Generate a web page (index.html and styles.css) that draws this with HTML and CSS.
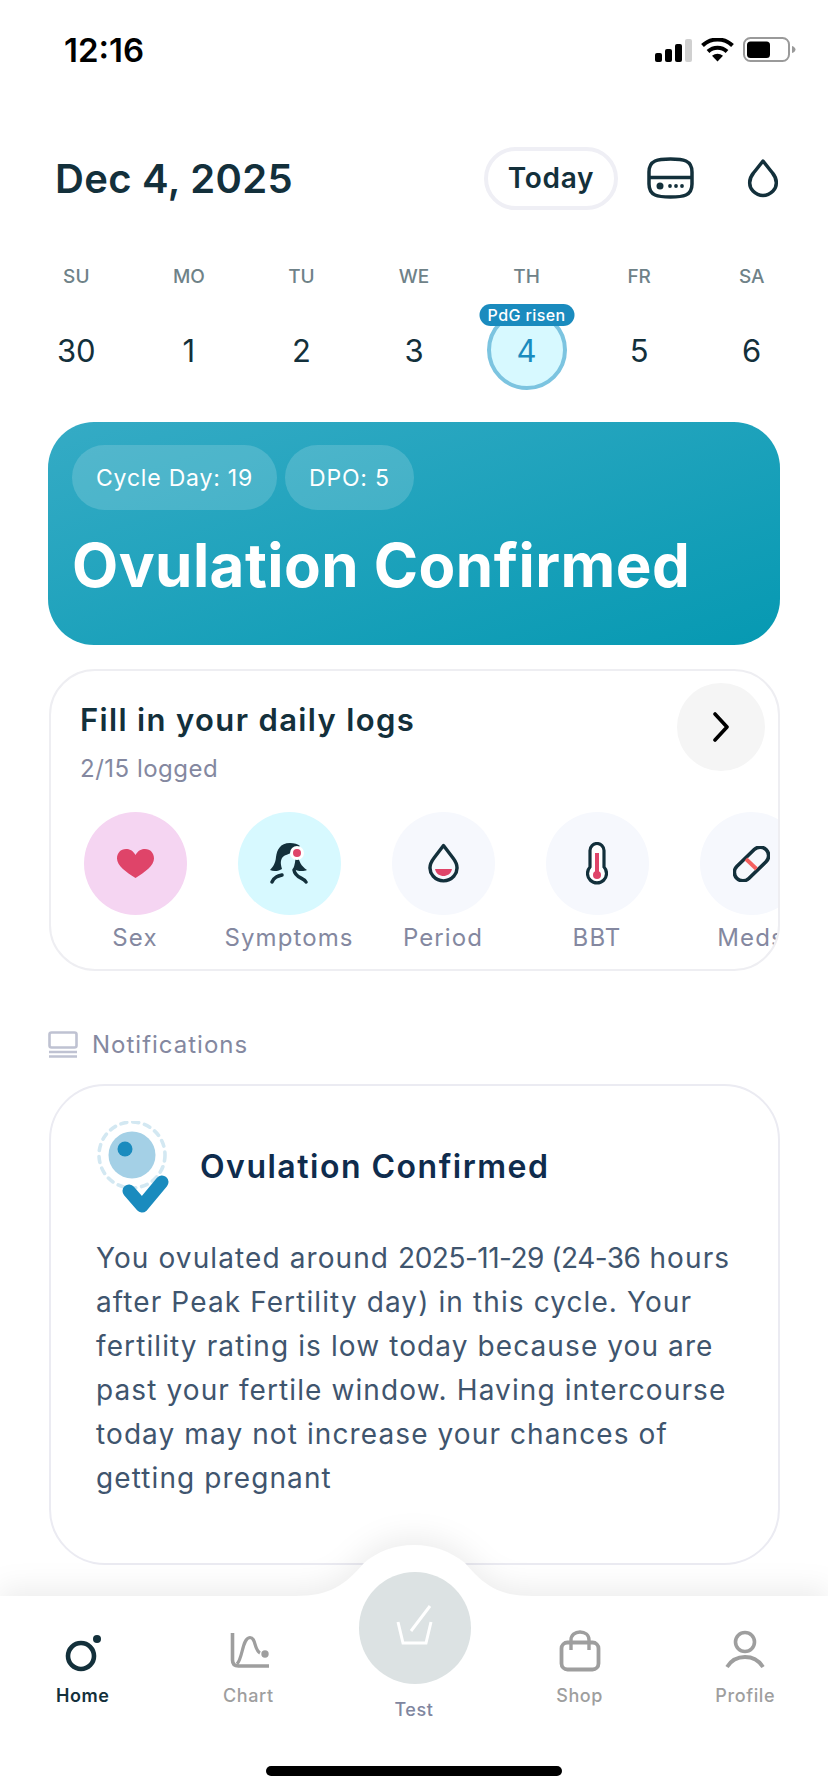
FILE: index.html
```html
<!DOCTYPE html>
<html lang="en">
<head>
    <meta charset="UTF-8">
    <title>Home</title>
    <link rel="stylesheet" href="styles.css">
</head>
<body>
    <div class="screen">
        <div class="status-bar">
            <span class="time">12:16</span>
            <div class="status-icons">
                <svg class="signal" width="37" height="23" viewBox="0 0 37 23">
                    <rect x="0" y="14" width="7" height="9" rx="2"/>
                    <rect x="10" y="10" width="7" height="13" rx="2"/>
                    <rect x="20" y="5" width="7" height="18" rx="2"/>
                    <rect x="30" y="0" width="7" height="23" rx="2" fill="#d0d0d0"/>
                </svg>
                <svg class="wifi" width="33" height="24" viewBox="0 0 33 24">
                    <path d="M1.5 7.5C10 -.5 23 -.5 31.5 7.5" fill="none" stroke="#000" stroke-width="4"/>
                    <path d="M7 13.5C12.5 8.5 20.5 8.5 26 13.5" fill="none" stroke="#000" stroke-width="4"/>
                    <path d="M16.5 23.5L11 17.8C14.5 15 18.5 15 22 17.8Z"/>
                </svg>
                <svg class="battery" width="53" height="26" viewBox="0 0 53 26">
                    <rect x="1" y="1" width="45" height="23" rx="6.5" fill="none" stroke="#9a9a9a" stroke-width="2"/>
                    <rect x="4" y="4.500" width="23" height="16.500" rx="3.500"/>
                    <path d="M49 9C51 9.500 52.500 11 52.500 12.500C52.500 14 51 15.500 49 16Z" fill="#9a9a9a"/>
                </svg>
            </div>
        </div>

        <div class="date-row">
            <h1 class="date">Dec 4, 2025</h1>
            <button class="today">Today</button>
            <svg class="device-icon" width="47" height="42" viewBox="0 0 47 42">
                <path d="M23.500 2C36 2 45 3 45 15V27C45 39 36 40 23.500 40C11 40 2 39 2 27V15C2 3 11 2 23.500 2Z" fill="none" stroke="#13303b" stroke-width="3.500"/>
                <path d="M2 20.500H45" stroke="#13303b" stroke-width="3.500"/>
                <circle cx="13" cy="29" r="3.500" fill="#13303b"/>
                <circle cx="23" cy="29" r="1.900" fill="#13303b"/>
                <circle cx="29" cy="29" r="1.900" fill="#13303b"/>
                <circle cx="35" cy="29" r="1.900" fill="#13303b"/>
            </svg>
            <svg class="drop-icon" width="32" height="40" viewBox="0 0 32 40">
                <path d="M16 3L25.500 15C31 21.500 30 29 26 33C20 39 12 39 6 33C2 29 1 21.500 6.500 15Z" fill="none" stroke="#13303b" stroke-width="3.500" stroke-linejoin="round"/>
            </svg>
        </div>

        <div class="week">
            <span class="weekday">SU</span>
            <span class="weekday">MO</span>
            <span class="weekday">TU</span>
            <span class="weekday">WE</span>
            <span class="weekday">TH</span>
            <span class="weekday">FR</span>
            <span class="weekday">SA</span>
            <div class="day">30</div>
            <div class="day">1</div>
            <div class="day">2</div>
            <div class="day">3</div>
            <div class="day current">4<span class="day-badge">PdG risen</span></div>
            <div class="day">5</div>
            <div class="day">6</div>
        </div>

        <div class="hero">
            <div class="hero-pills">
                <span class="hero-pill">Cycle Day: 19</span>
                <span class="hero-pill">DPO: 5</span>
            </div>
            <h2 class="hero-title">Ovulation Confirmed</h2>
        </div>

        <div class="logs-card">
            <div class="logs-head">
                <div>
                    <div class="logs-title">Fill in your daily logs</div>
                    <div class="logs-sub">2/15 logged</div>
                </div>
                <div class="logs-arrow">
                    <svg width="18" height="30" viewBox="0 0 18 30">
                        <path d="M3 2L15 15L3 28" fill="none" stroke="#000" stroke-width="3.600" stroke-linecap="round" stroke-linejoin="round"/>
                    </svg>
                </div>
            </div>
            <div class="logs-row">
                <div class="log-item">
                    <div class="log-circle pink">
                        <svg width="37" height="29" viewBox="0 0 37 29">
                            <path d="M18.500 6C16 1.500 12.500 0 9 0C3.500 0 0 4.200 0 9.500C0 16.500 9 23 18.500 29C28 23 37 16.500 37 9.500C37 4.200 33.500 0 28 0C24.500 0 21 1.500 18.500 6Z" fill="#df4469"/>
                        </svg>
                    </div>
                    <span class="log-label">Sex</span>
                </div>
                <div class="log-item">
                    <div class="log-circle cyan">
                        <svg width="39" height="42" viewBox="0 0 39 42">
                            <path d="M20 0C10 0 7 7 6 14C5.500 20 3 24 0 27C4 29 9 28 12 26C11 22 10 19 12 15C14 12 19 11 24 9L30 3C28 1 24 0 20 0Z" fill="#13303b"/>
                            <path d="M28 13C29 18 31 23 37 27C33 29 27 28 23 26C25 22 25 18 26 13Z" fill="#13303b"/>
                            <path d="M2 39C4 34 8 33 12 32M36 39C33 34 25 35 24 27" fill="none" stroke="#13303b" stroke-width="3.400" stroke-linecap="round"/>
                            <circle cx="27" cy="10" r="7" fill="#fff"/>
                            <circle cx="27" cy="10" r="4" fill="#df4469"/>
                        </svg>
                    </div>
                    <span class="log-label">Symptoms</span>
                </div>
                <div class="log-item">
                    <div class="log-circle pale">
                        <svg width="31" height="41" viewBox="0 0 31 41">
                            <path d="M15.500 2.500L25 15C30 21.500 30 28 26 33C20 39.500 11 39.500 5 33C1 28 1 21.500 6 15Z" fill="none" stroke="#13303b" stroke-width="3.400" stroke-linejoin="round"/>
                            <path d="M7 26H24C23 31 19 33 15.500 33C12 33 8 31 7 26Z" fill="#df4469"/>
                        </svg>
                    </div>
                    <span class="log-label">Period</span>
                </div>
                <div class="log-item">
                    <div class="log-circle pale">
                        <svg width="22" height="44" viewBox="0 0 22 44">
                            <path d="M4 25V8.500a7 7 0 0 1 14 0V25a9.500 9.500 0 1 1 -14 0Z" fill="#fff" stroke="#13303b" stroke-width="3.200"/>
                            <path d="M11 11V30" stroke="#df4469" stroke-width="4"/>
                            <circle cx="11" cy="33" r="4" fill="#df4469"/>
                        </svg>
                    </div>
                    <span class="log-label">BBT</span>
                </div>
                <div class="log-item">
                    <div class="log-circle pale">
                        <svg class="pill-icon" width="37" height="36" viewBox="0 0 37 36">
                            <rect x="-2" y="9.500" width="41" height="17" rx="8.500" transform="rotate(-44 18.500 18)" fill="none" stroke="#13303b" stroke-width="3.600"/>
                            <path d="M13 13L23.500 23" stroke="#f4605f" stroke-width="3.800"/>
                        </svg>
                    </div>
                    <span class="log-label">Meds</span>
                </div>
            </div>
        </div>

        <div class="notif-label">
            <svg width="30" height="27" viewBox="0 0 30 27">
                <rect x="1.500" y="1.500" width="27" height="15" rx="2" fill="none" stroke="#bfc2d2" stroke-width="2.600"/>
                <path d="M1 21H29M1 25.500H29" stroke="#bfc2d2" stroke-width="2.400"/>
            </svg>
            <span>Notifications</span>
        </div>

        <div class="notif-card">
            <div class="notif-head">
                <svg width="72" height="94" viewBox="0 0 72 94">
                    <circle cx="35" cy="34" r="33" fill="none" stroke="#d3e8f2" stroke-width="3.600" stroke-dasharray="6 6" stroke-linecap="round"/>
                    <circle cx="35" cy="34" r="23.500" fill="#a4d0e6"/>
                    <circle cx="28" cy="28" r="7.500" fill="#1a8bbe"/>
                    <path d="M32 70L45 85L65 61" fill="none" stroke="#1a8bbe" stroke-width="13" stroke-linecap="round" stroke-linejoin="round"/>
                </svg>
                <h3 class="notif-title">Ovulation Confirmed</h3>
            </div>
            <p class="notif-body">You ovulated around <span class="tight">2025-11-29 (24-36</span> hours<br>after Peak Fertility day) in this cycle. Your<br>fertility rating is low today because you are<br>past your fertile window. Having intercourse<br>today may not increase your chances of<br>getting pregnant</p>
        </div>

        <div class="tab-bar">
            <svg class="tab-bg" width="828" height="247" viewBox="0 0 828 247">
                <path d="M0 51H296C330 51 345 40 364 18C378 6 395 0 414 0C433 0 450 6 465 18C484 40 498 51 532 51H828V247H0Z" fill="#fff"/>
            </svg>
            <div class="tabs">
                <div class="tab active">
                    <svg width="40" height="42" viewBox="0 0 40 42">
                        <circle cx="18" cy="26" r="13" fill="none" stroke="#13303b" stroke-width="4.600"/>
                        <circle cx="34" cy="9" r="4" fill="#13303b"/>
                    </svg>
                    <span>Home</span>
                </div>
                <div class="tab">
                    <svg class="chart-icon" width="42" height="42" viewBox="0 0 42 42">
                        <path d="M3.500 3V30Q3.500 36 9.500 36H40" fill="none" stroke="#9e9e9e" stroke-width="3.600"/>
                        <path d="M8 34C14 28 13 8 21 7.500C27 7.500 25 20 31 23" fill="none" stroke="#9e9e9e" stroke-width="3.200"/>
                        <circle cx="36" cy="24" r="3.700" fill="#9e9e9e"/>
                    </svg>
                    <span>Chart</span>
                </div>
                <div class="tab test">
                    <div class="test-circle">
                        <svg width="112" height="112" viewBox="0 0 112 112">
                            <path d="M39 50L44 71H67L72 50M52 59L71 34" fill="none" stroke="#fff" stroke-width="3"/>
                        </svg>
                    </div>
                    <span>Test</span>
                </div>
                <div class="tab">
                    <svg width="42" height="42" viewBox="0 0 42 42">
                        <rect x="2.500" y="12.500" width="37" height="27" rx="6" fill="none" stroke="#9e9e9e" stroke-width="3.800"/>
                        <path d="M12 20V10C12 5 16 2 21 2C26 2 30 5 30 10V20" fill="none" stroke="#9e9e9e" stroke-width="3.400"/>
                    </svg>
                    <span>Shop</span>
                </div>
                <div class="tab">
                    <svg width="42" height="42" viewBox="0 0 42 42">
                        <circle cx="21" cy="12" r="9.500" fill="none" stroke="#9e9e9e" stroke-width="3.600"/>
                        <path d="M3 37C8 29 15 27 21 27C27 27 34 29 39 37" fill="none" stroke="#9e9e9e" stroke-width="3.800"/>
                    </svg>
                    <span>Profile</span>
                </div>
            </div>
            <div class="home-indicator"></div>
        </div>
    </div>
</body>
</html>
```

FILE: styles.css
```css
* {
    box-sizing: border-box;
}
body {
    margin: 0;
    background-color: #fff;
    font-family: Inter, "Open Sans", sans-serif;
    color: #13303b;
}
h1, h2, h3, p {
    margin: 0;
}
.screen {
    position: relative;
    width: 828px;
    height: 1792px;
    overflow: hidden;
    background-color: #fff;
}

/* status bar */
.status-bar {
    display: flex;
    justify-content: space-between;
    align-items: center;
    height: 100px;
    padding: 0 32px 0 64px;
    color: #000;
}
.time {
    font-size: 33px;
    font-weight: 600;
}
.status-icons {
    display: flex;
    align-items: center;
    gap: 9px;
}

/* date header */
.date-row {
    display: flex;
    align-items: center;
    height: 64px;
    margin-top: 46px;
    padding-left: 55px;
}
.date {
    flex: 1;
    font-size: 40px;
    font-weight: 600;
    letter-spacing: 0.3px;
}
.today {
    width: 134px;
    height: 63px;
    border: 4px solid #efeff5;
    border-radius: 32px;
    background-color: #fff;
    font-family: inherit;
    font-size: 28px;
    font-weight: 600;
    letter-spacing: 0.7px;
    color: #13303b;
}
.device-icon {
    margin-left: 29px;
}
.drop-icon {
    margin-left: 53px;
    margin-right: 49px;
}

/* week strip */
.week {
    display: grid;
    grid-template-columns: repeat(7, 1fr);
    padding: 0 20px;
    margin-top: 55px;
    justify-items: center;
}
.weekday {
    height: 24px;
    line-height: 24px;
    font-size: 19px;
    font-weight: 500;
    color: #6f8288;
}
.day {
    position: relative;
    display: flex;
    justify-content: center;
    align-items: center;
    width: 80px;
    height: 80px;
    margin-top: 21px;
    border-radius: 50%;
    font-size: 31px;
}
.day.current {
    border: 4px solid #7cc4e0;
    background-color: #d7f9ff;
    color: #1a8bbe;
}
.day-badge {
    position: absolute;
    top: -10px;
    left: 50%;
    transform: translateX(-50%);
    width: 95px;
    height: 22px;
    line-height: 22px;
    border-radius: 11px;
    background-color: #1a8bbe;
    color: #fff;
    font-size: 16px;
    font-weight: 500;
    letter-spacing: 0.4px;
    text-align: center;
}

/* hero */
.hero {
    height: 223px;
    margin: 32px 48px 0;
    padding: 23px 24px;
    border-radius: 46px;
    background: linear-gradient(162deg, #35abc5 0%, #0699b2 100%);
    color: #fff;
}
.hero-pills {
    display: flex;
    gap: 8px;
}
.hero-pill {
    height: 65px;
    line-height: 66px;
    padding: 0 24px;
    border-radius: 33px;
    background-color: rgba(255, 255, 255, 0.16);
    font-size: 23px;
    letter-spacing: 0.8px;
}
.hero-title {
    margin-top: 19px;
    font-size: 60px;
    line-height: 72px;
    font-weight: 700;
    letter-spacing: 0.45px;
    white-space: nowrap;
}

/* daily logs */
.logs-card {
    height: 302px;
    margin: 24px 48px 0 49px;
    padding: 12px 13px 0 30px;
    border: 2px solid #eeeef2;
    border-radius: 46px;
    overflow: hidden;
}
.logs-head {
    display: flex;
    justify-content: space-between;
    height: 101px;
}
.logs-title {
    margin-top: 18px;
    margin-left: -1px;
    line-height: 38px;
    font-size: 31px;
    font-weight: 600;
    letter-spacing: 1.35px;
}
.logs-sub {
    margin-top: 15px;
    margin-left: -1px;
    line-height: 30px;
    font-size: 24px;
    letter-spacing: 0.5px;
    color: #8488a0;
}
.logs-arrow {
    display: flex;
    justify-content: center;
    align-items: center;
    width: 88px;
    height: 88px;
    border-radius: 50%;
    background-color: #f5f5f5;
}
.logs-row {
    display: flex;
    margin: 28px 0 0 -23px;
}
.log-item {
    display: flex;
    flex: none;
    flex-direction: column;
    align-items: center;
    width: 154px;
}
.log-circle {
    display: flex;
    justify-content: center;
    align-items: center;
    width: 103px;
    height: 103px;
    border-radius: 50%;
}
.pink {
    background-color: #f5d5f2;
}
.cyan {
    background-color: #d7f9ff;
}
.pale {
    background-color: #f6f8fd;
}
.log-label {
    margin-top: 8px;
    line-height: 30px;
    font-size: 24px;
    letter-spacing: 1.1px;
    color: #8488a0;
}

/* notifications */
.notif-label {
    display: flex;
    align-items: center;
    gap: 14px;
    height: 28px;
    margin: 59px 0 0 48px;
    font-size: 24px;
    letter-spacing: 1px;
    color: #8488a0;
}
.notif-card {
    height: 481px;
    margin: 26px 48px 0 49px;
    padding: 35px 30px 0 45px;
    border: 2px solid #ebebf2;
    border-radius: 56px;
}
.notif-head {
    display: flex;
    align-items: center;
    gap: 31px;
    margin-left: 1px;
}
.notif-title {
    padding-bottom: 4px;
    font-size: 32px;
    font-weight: 600;
    letter-spacing: 1.5px;
    color: #0f2c4d;
}
.notif-body {
    margin-top: 21px;
    font-size: 28px;
    line-height: 44px;
    letter-spacing: 1.1px;
    white-space: nowrap;
    color: #3f556e;
}
.tight {
    letter-spacing: -0.5px;
}

/* bottom tabs */
.tab-bar {
    position: absolute;
    left: 0;
    bottom: 0;
    width: 828px;
    height: 247px;
}
.tab-bg {
    position: absolute;
    top: 0;
    left: 0;
    overflow: visible;
    filter: drop-shadow(0 -8px 14px rgba(0, 0, 0, 0.07));
}
.tabs {
    position: relative;
    display: grid;
    grid-template-columns: repeat(5, 1fr);
    align-items: start;
}
.tab {
    display: flex;
    flex-direction: column;
    align-items: center;
    padding-top: 85px;
    font-size: 18px;
    font-weight: 500;
    letter-spacing: 0.6px;
    color: #9e9e9e;
}
.tab span {
    margin-top: 13px;
    line-height: 22px;
}
.tab.active {
    font-weight: 600;
    color: #13303b;
}
.tab.test {
    padding-top: 27px;
    color: #80869f;
}
.tab.test span {
    margin-top: 15px;
}
.chart-icon {
    margin-left: 3px;
}
.test-circle {
    width: 112px;
    height: 112px;
    margin-left: 2px;
    border-radius: 50%;
    background-color: #dce2e3;
}
.test-circle svg {
    display: block;
}
.home-indicator {
    position: relative;
    width: 296px;
    height: 10px;
    margin: 45px auto 0;
    border-radius: 5px;
    background-color: #000;
}
```
